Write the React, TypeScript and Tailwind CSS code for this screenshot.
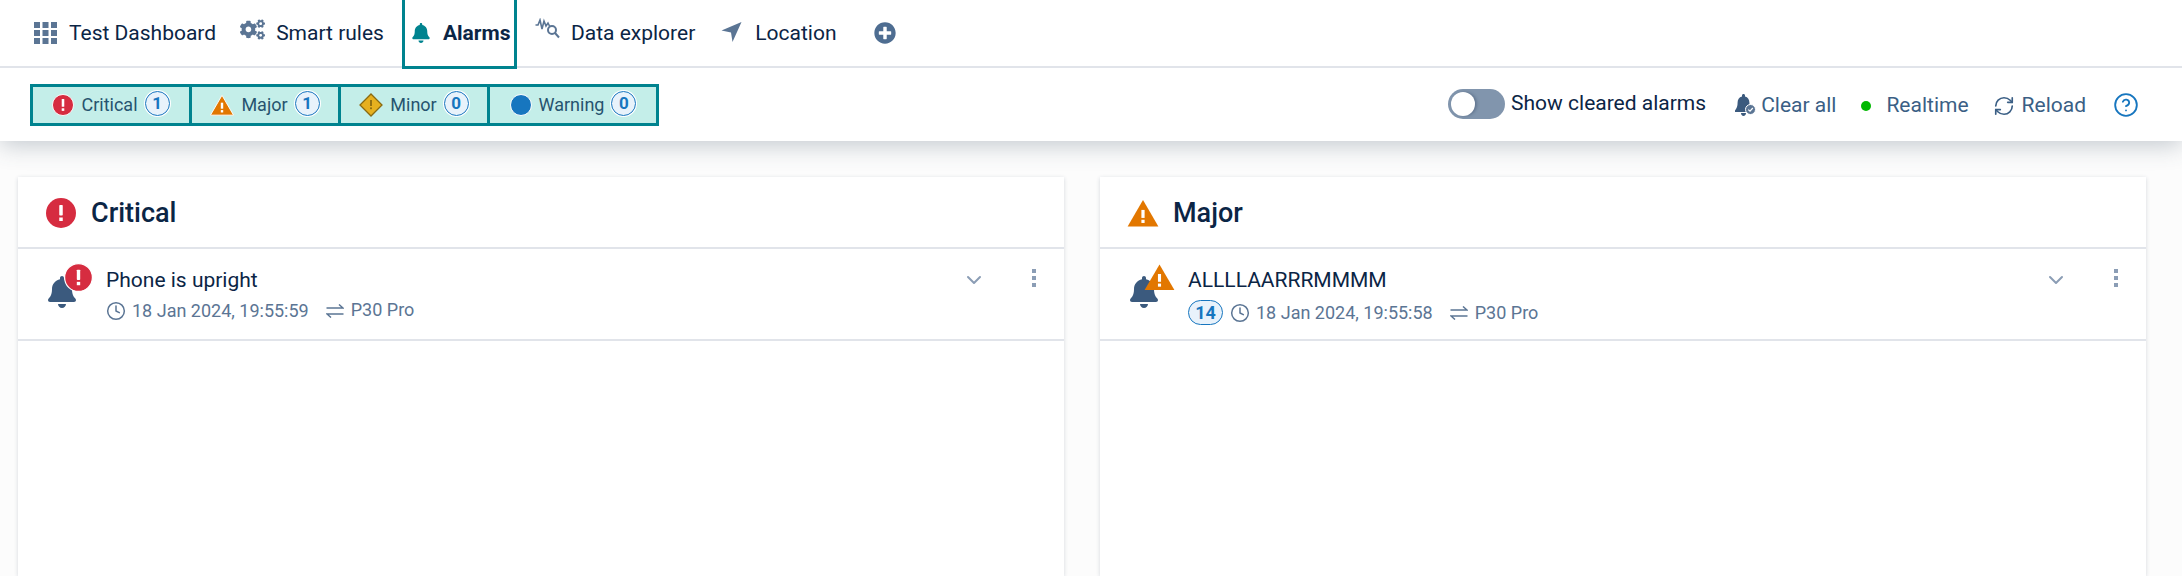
import React from "react";
import { FaBell, FaCogs, FaPlusCircle } from "react-icons/fa";
import { Clock, RefreshCw, CircleHelp, ChevronDown } from "lucide-react";

function Grid() {
  return (
    <svg width="23" height="22" viewBox="0 0 23 22" fill="#5b7594">
      {[0, 8, 16].map((y) =>
        [0, 8.5, 17].map((x) => <rect key={`${x}-${y}`} x={x} y={y} width="6" height="6" />)
      )}
    </svg>
  );
}

function Explorer() {
  return (
    <svg width="25" height="22" viewBox="0 0 25 22" fill="none" stroke="#5b7594" strokeWidth="1.6">
      <path d="M0.5 7 L3 7 L5 2 L7 11 L9 3 L11 8 L13 5 L14.5 8" />
      <circle cx="17" cy="12" r="4" strokeWidth="2" />
      <path d="M20 15 L24 19.5" strokeWidth="2" />
    </svg>
  );
}

function Arrow() {
  return (
    <svg width="21" height="20" viewBox="0 0 20 20" fill="#5b7594">
      <path d="M0 8.5 L20 0 L11 20 L9.5 10.5 Z" />
    </svg>
  );
}

function CriticalIcon({ size = 20, ring = false }: { size?: number; ring?: boolean }) {
  return (
    <svg width={size} height={size} viewBox="0 0 24 24">
      <circle cx="12" cy="12" r={ring ? 11.5 : 12} fill="#d62c40" stroke={ring ? "#fff" : "none"} strokeWidth={ring ? 1 : 0} />
      <rect x="10.6" y="5.5" width="2.8" height="8.5" rx="0.6" fill="#fff" />
      <rect x="10.6" y="15.6" width="2.8" height="2.8" fill="#fff" />
    </svg>
  );
}

function MajorIcon({ w = 22, h = 20, ring = false }: { w?: number; h?: number; ring?: boolean }) {
  return (
    <svg width={w} height={h} viewBox="0 0 26 23">
      <path d="M13 1 L25.5 22.5 L0.5 22.5 Z" fill="#e27700" stroke={ring ? "#fff" : "none"} strokeWidth={ring ? 1 : 0} />
      <rect x="11.7" y="9" width="2.6" height="6.5" fill="#fff" />
      <rect x="11.7" y="17" width="2.6" height="2.6" fill="#fff" />
    </svg>
  );
}

function MinorIcon() {
  return (
    <svg width="24" height="24" viewBox="0 0 24 24">
      <path d="M12 1 L23 12 L12 23 L1 12 Z" fill="#e6b01f" stroke="#8a6a10" strokeWidth="1.3" />
      <rect x="11.1" y="7" width="1.8" height="6" fill="#8a6a10" />
      <rect x="11.1" y="14.4" width="1.8" height="1.8" fill="#8a6a10" />
    </svg>
  );
}

function WarningIcon() {
  return <div className="h-[22px] w-[22px] rounded-full border border-white bg-[#1776bf]" />;
}

function Swap() {
  return (
    <svg width="18" height="14" viewBox="0 0 18 14" fill="none" stroke="#5b7594" strokeWidth="1.5">
      <path d="M0.5 4 H17 L13 0.5" />
      <path d="M17.5 10 H1 L5 13.5" />
    </svg>
  );
}

function ClearBell() {
  return (
    <svg width="21" height="22" viewBox="0 0 21 22">
      <path
        d="M8.5 0 C7.6 0 7 .7 7 1.5 V2.4 C4 3 2.6 5.6 2.6 8.5 C2.6 12.5 1.8 14 0 16.5 V18 H17 V16.5 C15.2 14 14.4 12.5 14.4 8.5 C14.4 5.6 13 3 10 2.4 V1.5 C10 .7 9.4 0 8.5 0 Z M6 19 C6 20.6 7 22 8.5 22 C10 22 11 20.6 11 19 Z"
        fill="#3b5a7e"
      />
      <circle cx="15.5" cy="15.5" r="5" fill="#5b7594" stroke="#fff" strokeWidth="1" />
      <path d="M13.3 15.6 L15 17.2 L17.8 14" fill="none" stroke="#fff" strokeWidth="1.2" />
    </svg>
  );
}

function Badge({ n }: { n: number }) {
  return (
    <span className="flex h-[25px] w-[25px] items-center justify-center rounded-full border border-[#1776bf] bg-[#e8f2fb] text-[17px] font-bold leading-none text-[#1776bf] shadow-[0_0_0_1px_#fff]">
      {n}
    </span>
  );
}

function Filter({ icon, label, n, w, last }: { icon: React.ReactNode; label: string; n: number; w: string; last?: boolean }) {
  return (
    <div className={`flex h-full items-center justify-center ${w} ${last ? "" : "border-r-[3px] border-[#00838f]"}`}>
      {icon}
      <span className="ml-[7px] mr-[7px] text-[18px] leading-none text-[#26536f]">{label}</span>
      <span className="-mt-[3px]"><Badge n={n} /></span>
    </div>
  );
}

function Meta({ date, device, badge, lift }: { date: string; device: string; badge?: string; lift?: boolean }) {
  return (
    <div className="mt-[8px] flex items-center text-[18px] leading-[22px] text-[#5b7594]">
      {badge && (
        <span className="mr-[7px] flex h-[25px] w-[35px] items-center justify-center rounded-full border border-[#1776bf] bg-[#e8f2fb] text-[18px] font-bold text-[#1776bf]">
          {badge}
        </span>
      )}
      <Clock size={20} strokeWidth={1.8} className="mr-[6px]" />
      <span>{date}</span>
      <span className="ml-[17px] mr-[7px]"><Swap /></span>
      <span className={lift ? "-mt-[3px]" : ""}>{device}</span>
    </div>
  );
}

function Card({ headIcon, title, alarmIcon, label, meta }: { headIcon: React.ReactNode; title: string; alarmIcon: React.ReactNode; label: string; meta: React.ReactNode }) {
  return (
    <section className="flex min-w-0 flex-1 flex-col bg-white shadow-[0_1px_4px_rgba(30,50,80,0.18)]">
      <header className="flex h-[72px] items-center gap-[14px] border-b-[2px] border-[#e1e4ea] pl-[27px] pt-[2px]">
        <div className="flex w-[32px] justify-center">{headIcon}</div>
        <h2 className="text-[27px] font-medium leading-none text-[#0b2545]">{title}</h2>
      </header>
      <div className="flex h-[92px] border-b-[2px] border-[#e1e4ea]">
        <div className="relative ml-[30px] mt-[14px] h-[60px] w-[46px] shrink-0">
          <FaBell size={32} color="#3b5a7e" className="absolute -left-[2px] top-[13px]" />
          <div className="absolute left-[16px] top-0">{alarmIcon}</div>
        </div>
        <div className="ml-[12px] flex-1 pt-[19px]">
          <div className="text-[21px] leading-[24px] text-[#0b2545]">{label}</div>
          {meta}
        </div>
        <div className="mr-[28px] mt-[20px] flex items-start">
          <ChevronDown size={24} strokeWidth={2} color="#8b9db5" className="-mt-[1px] mr-[46px]" />
          <div className="flex flex-col gap-[3px]">
            <span className="h-[4px] w-[4px] bg-[#8b9db5]" />
            <span className="h-[4px] w-[4px] bg-[#8b9db5]" />
            <span className="h-[4px] w-[4px] bg-[#8b9db5]" />
          </div>
        </div>
      </div>
      <div className="flex-1" />
    </section>
  );
}

export default function App() {
  return (
    <div className="flex h-[576px] flex-col overflow-hidden bg-[#fcfcfc] font-['Roboto',sans-serif]">
      <nav className="relative z-20 flex h-[68px] shrink-0 items-stretch border-b-[2px] border-[#e1e4ea] bg-white pl-[34px]">
        <div className="flex items-center gap-[12px]">
          <Grid />
          <span className="text-[21px] leading-none text-[#0b2545]">Test Dashboard</span>
        </div>
        <div className="ml-[24px] flex items-center gap-[11px]">
          <FaCogs size={25} color="#5b7594" className="-mt-[8px]" />
          <span className="text-[21px] leading-none text-[#0b2545]">Smart rules</span>
        </div>
        <div className="-mb-[3px] ml-[18px] flex w-[115px] items-center gap-[12px] border-x-[3px] border-b-[3px] border-[#00838f] pl-[6px]">
          <FaBell size={20} color="#00838f" />
          <span className="text-[21px] font-bold leading-none text-[#0b2545]">Alarms</span>
        </div>
        <div className="ml-[18px] flex items-center gap-[11px]">
          <span className="-mt-[8px]"><Explorer /></span>
          <span className="text-[21px] leading-none text-[#0b2545]">Data explorer</span>
        </div>
        <div className="ml-[26px] flex items-center gap-[13px]">
          <span className="-mt-[2px]"><Arrow /></span>
          <span className="text-[21px] leading-none text-[#0b2545]">Location</span>
        </div>
        <div className="ml-[37px] flex items-center">
          <FaPlusCircle size={22} color="#4e6d91" />
        </div>
      </nav>

      <div className="relative z-10 flex h-[73px] shrink-0 items-center justify-between bg-white pl-[30px] pr-[43px] shadow-[0_4px_24px_rgba(60,80,100,0.3)]">
        <div className="flex h-[42px] items-center border-[3px] border-[#00838f] bg-[#c4eee9]">
          <Filter icon={<CriticalIcon size={22} ring />} label="Critical" n={1} w="w-[159px]" />
          <Filter icon={<MajorIcon w={24} h={22} ring />} label="Major" n={1} w="w-[149px]" />
          <Filter icon={<MinorIcon />} label="Minor" n={0} w="w-[149px]" />
          <Filter icon={<WarningIcon />} label="Warning" n={0} w="w-[166px]" last />
        </div>
        <div className="flex items-center text-[#3b5f85]">
          <div className="-mt-[2px] flex h-[30px] w-[57px] items-center rounded-full bg-[#8195ad] pl-[3px]">
            <span className="h-[24px] w-[24px] rounded-full bg-white shadow-[2px_0_3px_rgba(40,60,90,0.35)]" />
          </div>
          <span className="-mt-[3px] ml-[6px] text-[21px] leading-none text-[#0b2545]">Show cleared alarms</span>
          <span className="ml-[29px] flex"><ClearBell /></span>
          <span className="ml-[5px] mt-[2px] text-[21px] leading-none">Clear all</span>
          <span className="ml-[25px] mt-[2px] h-[10px] w-[10px] rounded-full bg-[#00b800]" />
          <span className="ml-[15px] mt-[2px] text-[21px] leading-none">Realtime</span>
          <RefreshCw size={22} strokeWidth={1.8} className="ml-[24px] mt-[2px]" />
          <span className="ml-[7px] mt-[2px] text-[21px] leading-none">Reload</span>
          <CircleHelp size={26} strokeWidth={1.7} color="#1776bf" className="ml-[27px]" />
        </div>
      </div>

      <main className="flex flex-1 gap-[36px] pl-[18px] pr-[36px] pt-[36px]">
        <Card
          headIcon={<CriticalIcon size={30} />}
          title="Critical"
          alarmIcon={<CriticalIcon size={29} ring />}
          label="Phone is upright"
          meta={<Meta date="18 Jan 2024, 19:55:59" device="P30 Pro" lift />}
        />
        <Card
          headIcon={<MajorIcon w={34} h={30} />}
          title="Major"
          alarmIcon={<div className="-ml-[2px]"><MajorIcon w={31} h={28} /></div>}
          label="ALLLLAARRRMMMM"
          meta={<Meta date="18 Jan 2024, 19:55:58" device="P30 Pro" badge="14" />}
        />
      </main>
    </div>
  );
}
